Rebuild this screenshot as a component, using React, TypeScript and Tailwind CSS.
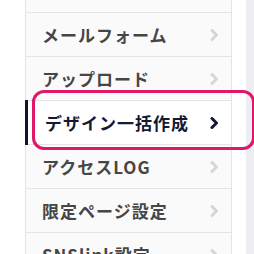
import React from "react";

const Chevron = ({ active }: { active?: boolean }) => (
  <svg width="10" height="12" viewBox="0 0 10 12" className="shrink-0">
    <polyline
      points="3,1.5 7.5,6 3,10.5"
      fill="none"
      stroke={active ? "#141a33" : "#d6d6d6"}
      strokeWidth={3}
      strokeLinecap="round"
      strokeLinejoin="round"
    />
  </svg>
);

const items = [
  { label: "メールフォーム" },
  { label: "アップロード" },
  { label: "デザイン一括作成", active: true },
  { label: "アクセスLOG" },
  { label: "限定ページ設定" },
  { label: "SNSlink設定" },
];

export default function App() {
  return (
    <div
      className="relative w-[254px] h-[254px] overflow-hidden bg-white flex"
      style={{ fontFamily: '"Noto Sans CJK JP", "Noto Sans", sans-serif' }}
    >
      <div className="w-[25px] shrink-0" />
      <div className="w-[207px] shrink-0 border-x border-[#e4e4e4] bg-[#fafafa] flex flex-col">
        <div className="h-[13px] shrink-0 border-b border-[#e4e4e4]" />
        {items.map((it) => (
          <div
            key={it.label}
            className={`h-[44px] shrink-0 border-b border-[#e4e4e4] flex items-center justify-between pr-[12px] ${
              it.active ? "bg-white pl-[19px]" : "pl-[16px]"
            }`}
          >
            <span
              className={`text-[17px] font-bold tracking-[1px] leading-none ${
                it.active ? "text-[#141a33]" : "text-[#464646]"
              }`}
            >
              {it.label}
            </span>
            <Chevron active={it.active} />
          </div>
        ))}
      </div>
      <div className="w-[14px] shrink-0" />
      <div className="flex-1 bg-[#eceef1]" />

      <div className="absolute left-[25px] top-[100px] w-[3px] h-[45px] bg-[#0f1730]" />
      <div className="absolute left-[32px] top-[90px] w-[223px] h-[60px] rounded-[12px] border-[3px] border-[#e0186a]" />
    </div>
  );
}
